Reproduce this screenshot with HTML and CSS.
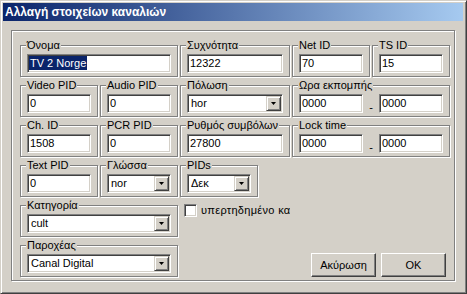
FILE: index.html
```html
<!DOCTYPE html>
<html lang="el">
<head>
    <meta charset="UTF-8">
    <title>Αλλαγή στοιχείων καναλιών</title>
    <link rel="stylesheet" href="styles.css">
</head>
<body>
    <div class="window">
        <div class="titlebar">Αλλαγή στοιχείων καναλιών</div>
        <div class="frame">
            <div class="grid">
                <!-- row 1 -->
                <div class="group wide">
                    <span class="caption">Όνομα</span>
                    <div class="edit"><span class="sel">TV 2 Norge</span></div>
                </div>
                <div class="group">
                    <span class="caption">Συχνότητα</span>
                    <div class="edit">12322</div>
                </div>
                <div class="group">
                    <span class="caption">Net ID</span>
                    <div class="edit">70</div>
                </div>
                <div class="group">
                    <span class="caption">TS ID</span>
                    <div class="edit">15</div>
                </div>

                <!-- row 2 -->
                <div class="group">
                    <span class="caption">Video PID</span>
                    <div class="edit">0</div>
                </div>
                <div class="group">
                    <span class="caption">Audio PID</span>
                    <div class="edit">0</div>
                </div>
                <div class="group">
                    <span class="caption">Πόλωση</span>
                    <div class="combo"><span class="value">hor</span><span class="drop"><svg width="5" height="3" viewBox="0 0 5 3"><polygon points="0,0 5,0 2.5,3" fill="#000"/></svg></span></div>
                </div>
                <div class="group wide">
                    <span class="caption">Ωρα εκπομπής</span>
                    <div class="pair">
                        <div class="edit">0000</div>
                        <span class="dash">-</span>
                        <div class="edit">0000</div>
                    </div>
                </div>

                <!-- row 3 -->
                <div class="group">
                    <span class="caption">Ch. ID</span>
                    <div class="edit">1508</div>
                </div>
                <div class="group">
                    <span class="caption">PCR PID</span>
                    <div class="edit">0</div>
                </div>
                <div class="group">
                    <span class="caption">Ρυθμός συμβόλων</span>
                    <div class="edit">27800</div>
                </div>
                <div class="group wide">
                    <span class="caption">Lock time</span>
                    <div class="pair">
                        <div class="edit">0000</div>
                        <span class="dash">-</span>
                        <div class="edit">0000</div>
                    </div>
                </div>

                <!-- row 4 -->
                <div class="group">
                    <span class="caption">Text PID</span>
                    <div class="edit">0</div>
                </div>
                <div class="group">
                    <span class="caption">Γλώσσα</span>
                    <div class="combo"><span class="value">nor</span><span class="drop"><svg width="5" height="3" viewBox="0 0 5 3"><polygon points="0,0 5,0 2.5,3" fill="#000"/></svg></span></div>
                </div>
                <div class="group narrow">
                    <span class="caption">PIDs</span>
                    <div class="combo"><span class="value">Δεκ</span><span class="drop"><svg width="5" height="3" viewBox="0 0 5 3"><polygon points="0,0 5,0 2.5,3" fill="#000"/></svg></span></div>
                </div>

                <!-- row 5 -->
                <div class="group wide row5">
                    <span class="caption">Κατηγορία</span>
                    <div class="combo"><span class="value">cult</span><span class="drop"><svg width="5" height="3" viewBox="0 0 5 3"><polygon points="0,0 5,0 2.5,3" fill="#000"/></svg></span></div>
                </div>
                <label class="check">
                    <span class="box"></span>
                    <span class="check-text">υπερτηδημένο κανάλι</span>
                </label>

                <!-- row 6 -->
                <div class="group wide row6">
                    <span class="caption">Παροχέας</span>
                    <div class="combo"><span class="value">Canal Digital</span><span class="drop"><svg width="5" height="3" viewBox="0 0 5 3"><polygon points="0,0 5,0 2.5,3" fill="#000"/></svg></span></div>
                </div>
                <div class="buttons">
                    <div class="btn">Ακύρωση</div>
                    <div class="btn">OK</div>
                </div>
            </div>
        </div>
    </div>
</body>
</html>
```

FILE: styles.css
```css
body {
    margin: 0;
    font-family: "Liberation Sans", Arial, sans-serif;
    font-size: 11px;
    color: #000;
    background-color: #d4d0c8;
}

.window {
    width: 467px;
    height: 294px;
    box-sizing: border-box;
    background-color: #d4d0c8;
    border: 1px solid;
    border-color: #d4d0c8 #404040 #404040 #d4d0c8;
    box-shadow: inset 1px 1px #fff, inset -1px -1px #808080;
    padding: 2px 3px 3px 2px;
}

.titlebar {
    height: 18px;
    line-height: 18px;
    padding-left: 2px;
    background: linear-gradient(to right, #0a246a, #a6caf0);
    color: #fff;
    font-size: 12px;
    font-weight: bold;
    white-space: nowrap;
}

.frame {
    margin: 9px 8px 0;
    height: 251px;
    box-sizing: border-box;
    border: 1px solid #808080;
    box-shadow: inset 1px 1px #fff, 1px 1px #fff;
    padding: 14px 4px 3px 8px;
}

.grid {
    display: grid;
    grid-template-columns: 78px 78px 110px 78px 78px;
    grid-template-rows: repeat(6, 32px);
    column-gap: 2px;
    row-gap: 8px;
}

/* etched group box with its caption sitting on the top line */
.group {
    position: relative;
    box-sizing: border-box;
    border: 1px solid #808080;
    box-shadow: inset 1px 1px #fff, 1px 1px #fff;
    padding: 8px 6px 3px;
}

.group.wide {
    grid-column: span 2;
}

.group.narrow {
    width: 78px;
    justify-self: start;
}

.group.row5 {
    grid-column: 1 / 3;
    grid-row: 5;
}

.group.row6 {
    grid-column: 1 / 3;
    grid-row: 6;
}

.caption {
    position: absolute;
    top: -7px;
    left: 5px;
    padding: 0 1px;
    line-height: 13px;
    background-color: #d4d0c8;
    white-space: nowrap;
}

.edit {
    height: 19px;
    box-sizing: border-box;
    background-color: #fff;
    border: 1px solid;
    border-color: #808080 #fff #fff #808080;
    box-shadow: inset 1px 1px #404040, inset -1px -1px #d4d0c8;
    padding-left: 2px;
    line-height: 17px;
    white-space: nowrap;
    overflow: hidden;
}

.sel {
    display: inline-block;
    line-height: 14px;
    margin-left: -1px;
    padding: 0 1px;
    background-color: #0a246a;
    color: #fff;
}

.combo {
    display: flex;
    height: 19px;
    box-sizing: border-box;
    background-color: #fff;
    border: 1px solid;
    border-color: #808080 #fff #fff #808080;
    box-shadow: inset 1px 1px #404040, inset -1px -1px #d4d0c8;
    padding: 1px;
}

.combo .value {
    flex: 1;
    padding-left: 2px;
    line-height: 15px;
    white-space: nowrap;
    overflow: hidden;
}

.drop {
    width: 15px;
    height: 15px;
    box-sizing: border-box;
    display: flex;
    align-items: center;
    justify-content: center;
    background-color: #d4d0c8;
    border: 1px solid;
    border-color: #d4d0c8 #404040 #404040 #d4d0c8;
    box-shadow: inset 1px 1px #fff, inset -1px -1px #808080;
}

.drop svg {
    display: block;
}

.pair {
    display: flex;
}

.pair .edit {
    width: 64px;
}

.dash {
    flex: 1;
    align-self: flex-end;
    text-align: center;
    line-height: 12px;
}

.check {
    grid-column: 3;
    grid-row: 5;
    align-self: start;
    display: flex;
    align-items: center;
    margin: -1px 0 0 4px;
    white-space: nowrap;
    overflow: hidden;
    line-height: 13px;
}

.box {
    flex: none;
    width: 13px;
    height: 13px;
    box-sizing: border-box;
    background-color: #fff;
    border: 1px solid;
    border-color: #808080 #fff #fff #808080;
    box-shadow: inset 1px 1px #404040, inset -1px -1px #d4d0c8;
}

.check-text {
    margin-left: 4px;
    letter-spacing: 0.3px;
}

.buttons {
    grid-column: 3 / 6;
    grid-row: 6;
    justify-self: end;
    align-self: end;
    display: flex;
    gap: 5px;
    margin-right: 4px;
}

.btn {
    width: 65px;
    height: 24px;
    box-sizing: border-box;
    display: flex;
    align-items: center;
    justify-content: center;
    border: 1px solid;
    border-color: #fff #404040 #404040 #fff;
    box-shadow: inset -1px -1px #808080;
}
```
